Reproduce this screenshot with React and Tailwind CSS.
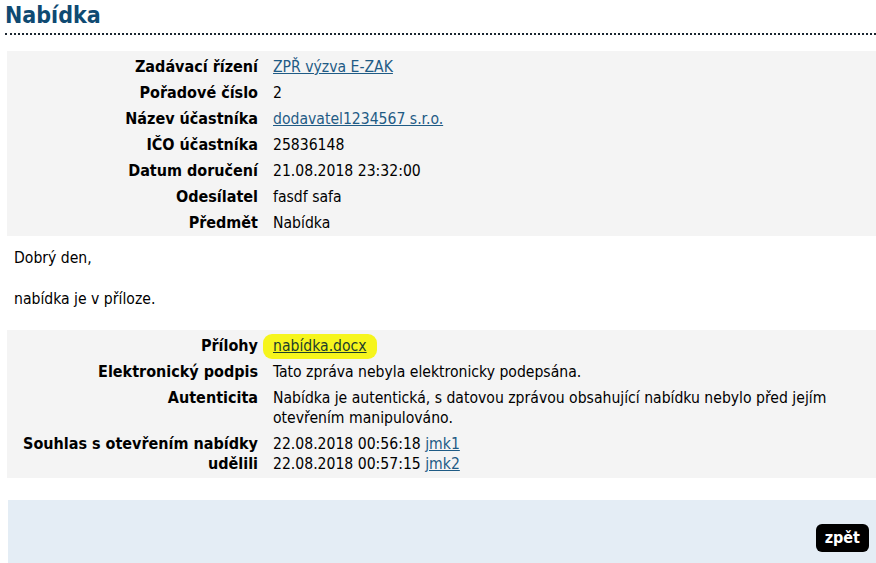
import React from 'react';

const font = { fontFamily: '"DejaVu Sans Condensed", "DejaVu Sans", sans-serif' };

const Row = ({ label, children }) => (
  <tr>
    <th className="w-[266px] pl-[16px] pr-[15px] py-[3px] text-right align-top text-[16px] font-bold leading-[20px]">{label}</th>
    <td className="pr-[40px] py-[3px] align-top text-[15.6px] leading-[20px]">{children}</td>
  </tr>
);

const A = ({ children }) => (
  <a href="#" className="text-[#1f5b85] underline">{children}</a>
);

const App = () => {
  return (
    <div className="min-h-screen w-[876px] bg-white text-black text-[15.6px]" style={font}>
      <h1 className="px-[5px] pt-[1px] text-[23px] font-bold leading-[28px] text-[#0f4a72]">Nabídka</h1>
      <div className="mt-[4px] ml-[5px] border-t-2 border-dotted border-[#1a2630]" />

      <div className="ml-[7px] mt-[16px] bg-[#f4f4f4] pt-[3px]">
        <table className="border-collapse">
          <tbody>
            <Row label="Zadávací řízení"><A>ZPŘ výzva E-ZAK</A></Row>
            <Row label="Pořadové číslo">2</Row>
            <Row label="Název účastníka"><A>dodavatel1234567 s.r.o.</A></Row>
            <Row label="IČO účastníka">25836148</Row>
            <Row label="Datum doručení">21.08.2018 23:32:00</Row>
            <Row label="Odesílatel">fasdf safa</Row>
            <Row label="Předmět">Nabídka</Row>
          </tbody>
        </table>
      </div>

      <div className="ml-[7px] px-[7px] pt-[12px] pb-[21px] leading-[20px]">
        <p>Dobrý den,</p>
        <p className="mt-[21px]">nabídka je v příloze.</p>
      </div>

      <div className="ml-[7px] bg-[#f4f4f4] pt-[3px] pb-[1px]">
        <table className="border-collapse">
          <tbody>
            <Row label="Přílohy">
              <span className="-mx-[10px] rounded-[9px] bg-[#f6f51d] px-[10px] pt-[3px] pb-[4px]">
                <a href="#" className="text-[#1c3d2a] underline">nabídka.docx</a>
              </span>
            </Row>
            <Row label="Elektronický podpis">Tato zpráva nebyla elektronicky podepsána.</Row>
            <Row label="Autenticita">Nabídka je autentická, s datovou zprávou obsahující nabídku nebylo před jejím otevřením manipulováno.</Row>
            <Row label="Souhlas s otevřením nabídky udělili">
              22.08.2018 00:56:18 <A>jmk1</A><br />
              22.08.2018 00:57:15 <A>jmk2</A>
            </Row>
          </tbody>
        </table>
      </div>

      <div className="ml-[8px] mt-[22px] flex h-[64px] items-end justify-end bg-[#e4edf5] pb-[12px] pr-[7px]">
        <button className="rounded-[6px] bg-black px-[9px] py-[4px] text-[16px] font-bold leading-[20px] text-white">zpět</button>
      </div>
    </div>
  );
};

export default App;
